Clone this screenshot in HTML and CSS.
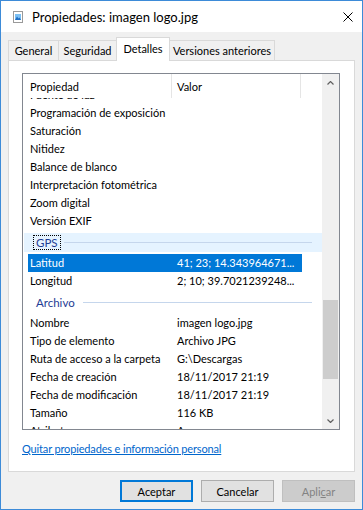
FILE: index.html
```html
<!DOCTYPE html>
<html lang="es">
<head>
<meta charset="utf-8">
<link rel="stylesheet" href="styles.css">
</head>
<body>
<div class="window">
  <div class="titlebar">
    <svg class="ticon" width="10" height="12" viewBox="0 0 10 12">
      <rect x="0.5" y="0.5" width="9" height="11" fill="#fff" stroke="#9a9a9a"/>
      <rect x="2" y="3" width="6" height="6" fill="#7cc0f4"/>
      <path d="M2 9 L4 5.5 L5.5 7.5 L6.5 6.5 L8 9 Z" fill="#1f6fc5"/>
    </svg>
    <span class="title">Propiedades: imagen logo.jpg</span>
    <svg class="close" width="10" height="10" viewBox="0 0 10 10">
      <path d="M0.5 0.5 L9.5 9.5 M9.5 0.5 L0.5 9.5" stroke="#000" stroke-width="1"/>
    </svg>
  </div>
  <div class="client">
    <div class="tabs">
      <div class="tab t-general">General</div>
      <div class="tab t-seg">Seguridad</div>
      <div class="tab t-det active">Detalles</div>
      <div class="tab t-ver">Versiones anteriores</div>
    </div>
    <div class="panel">
      <div class="listview">
        <div class="lv-main">
          <div class="lv-header">
            <div class="hcol h1">Propiedad</div>
            <div class="hcol h2">Valor</div>
            <div class="hcol h3"></div>
          </div>
          <div class="lv-body">
            <div class="lv-inner">
              <div class="row"><span class="k">Fuente de luz</span><span class="v"></span></div>
              <div class="row"><span class="k">Programación de exposición</span><span class="v"></span></div>
              <div class="row"><span class="k">Saturación</span><span class="v"></span></div>
              <div class="row"><span class="k">Nitidez</span><span class="v"></span></div>
              <div class="row"><span class="k">Balance de blanco</span><span class="v"></span></div>
              <div class="row"><span class="k">Interpretación fotométrica</span><span class="v"></span></div>
              <div class="row"><span class="k">Zoom digital</span><span class="v"></span></div>
              <div class="row"><span class="k">Versión EXIF</span><span class="v"></span></div>
              <div class="group hot"><div class="gbar"><span class="glabel focus">GPS</span><span class="gline"></span></div></div>
              <div class="row sel"><span class="k">Latitud</span><span class="v">41; 23; 14.343964671...</span></div>
              <div class="row"><span class="k">Longitud</span><span class="v">2; 10; 39.7021239248...</span></div>
              <div class="group g2"><div class="gbar"><span class="glabel">Archivo</span><span class="gline"></span></div></div>
              <div class="row"><span class="k">Nombre</span><span class="v">imagen logo.jpg</span></div>
              <div class="row"><span class="k">Tipo de elemento</span><span class="v">Archivo JPG</span></div>
              <div class="row"><span class="k">Ruta de acceso a la carpeta</span><span class="v">G:\Descargas</span></div>
              <div class="row"><span class="k">Fecha de creación</span><span class="v">18/11/2017 21:19</span></div>
              <div class="row"><span class="k">Fecha de modificación</span><span class="v">18/11/2017 21:19</span></div>
              <div class="row"><span class="k">Tamaño</span><span class="v">116 KB</span></div>
              <div class="row"><span class="k">Atributos</span><span class="v">A</span></div>
            </div>
          </div>
        </div>
        <div class="scrollbar">
          <div class="sarrow">
            <svg width="7" height="4" viewBox="0 0 7 4"><path d="M0.5 3.5 L3.5 0.5 L6.5 3.5" fill="none" stroke="#606060" stroke-width="1.2"/></svg>
          </div>
          <div class="track"><div class="thumb"></div></div>
          <div class="sarrow">
            <svg width="7" height="4" viewBox="0 0 7 4"><path d="M0.5 0.5 L3.5 3.5 L6.5 0.5" fill="none" stroke="#606060" stroke-width="1.2"/></svg>
          </div>
        </div>
      </div>
      <a class="link" href="#">Quitar propiedades e información personal</a>
    </div>
    <div class="buttons">
      <button class="btn default">Aceptar</button>
      <button class="btn">Cancelar</button>
      <button class="btn disabled">Apli<u>c</u>ar</button>
    </div>
  </div>
</div>
</body>
</html>
```

FILE: styles.css
```css
* { box-sizing: border-box; }
html, body { margin: 0; padding: 0; }
body {
  width: 363px;
  height: 510px;
  overflow: hidden;
  font-family: Lato, "Liberation Sans", Arial, sans-serif;
  font-size: 11px;
  color: #000;
  background: #f0f0f0;
}
.window {
  width: 363px;
  height: 510px;
  border: 1px solid #3d8bd8;
  background: #f0f0f0;
  display: flex;
  flex-direction: column;
}
.titlebar {
  height: 31px;
  background: #fff;
  display: flex;
  align-items: center;
  padding-left: 12px;
  flex: none;
}
.ticon { flex: none; }
.title {
  margin-left: 9px;
  font-size: 13px;
  flex: 1;
  white-space: nowrap;
}
.close { margin-right: 9px; flex: none; }
.client {
  flex: 1;
  display: flex;
  flex-direction: column;
}
.tabs {
  height: 28px;
  padding-top: 6px;
  padding-left: 7px;
  display: flex;
  align-items: flex-end;
}
.tab {
  height: 20px;
  border: 1px solid #d9d9d9;
  border-bottom: none;
  border-right: none;
  background: #f0f0f0;
  display: flex;
  align-items: center;
  justify-content: center;
  white-space: nowrap;
  line-height: 1;
}
.t-general { width: 50px; }
.t-seg { width: 58px; }
.t-det { width: 54px; }
.t-ver { width: 105px; border-right: 1px solid #d9d9d9; }
.tab.active {
  height: 24px;
  background: #fff;
  border-right: 1px solid #d9d9d9;
  margin-bottom: -1px;
  position: relative;
  z-index: 1;
  padding-bottom: 2px;
}
.tab.active + .tab { border-left: none; }
.panel {
  height: 412px;
  margin: 0 7px;
  border: 1px solid #d9d9d9;
  background: #fff;
  padding: 12px 0 0 13px;
  display: flex;
  flex-direction: column;
}
.listview {
  width: 318px;
  height: 357px;
  border: 1px solid #828790;
  display: flex;
  flex: none;
}
.lv-main {
  width: 299px;
  display: flex;
  flex-direction: column;
}
.lv-header {
  height: 24px;
  display: flex;
  flex: none;
}
.hcol {
  height: 24px;
  display: flex;
  align-items: center;
  border-right: 1px solid #e5e5e5;
}
.h1 { width: 149px; padding-left: 7px; }
.h2 { width: 129px; padding-left: 5px; }
.h3 { width: 21px; border-right: none; }
.lv-body {
  flex: 1;
  overflow: hidden;
}
.lv-inner { margin-top: -12px; }
.row {
  height: 18px;
  margin-left: 5px;
  width: 274px;
  display: flex;
  align-items: center;
  padding-bottom: 2px;
  white-space: nowrap;
}
.row .k { width: 149px; padding-left: 2px; flex: none; }
.row .v { flex: 1; }
.row.sel { background: #0078d7; color: #fff; }
.group {
  height: 24px;
  padding: 3px 0 2px 1px;
}
.gbar {
  height: 19px;
  display: flex;
  align-items: center;
  padding-left: 9px;
}
.group.hot .gbar { background: #e5f3ff; }
.glabel {
  color: #1e3c94;
  font-size: 11.5px;
  padding: 0 2px;
  border: 1px dotted transparent;
  height: 15px;
  line-height: 13px;
}
.glabel.focus { border-color: #000; }
.gline {
  flex: 1;
  height: 1px;
  background: #c5d6ec;
  margin-left: 3px;
  margin-right: 10px;
}
.g2 .gline { margin-left: 5px; }
.scrollbar {
  width: 17px;
  background: #f0f0f0;
  display: flex;
  flex-direction: column;
}
.sarrow {
  height: 17px;
  display: flex;
  align-items: center;
  justify-content: center;
  flex: none;
}
.track {
  flex: 1;
  padding-top: 209px;
}
.thumb {
  height: 79px;
  margin: 0 1px;
  background: #cdcdcd;
}
.link {
  margin-top: 11px;
  color: #0066cc;
  text-decoration: underline;
  line-height: 15px;
  letter-spacing: -0.15px;
  align-self: flex-start;
}
.buttons {
  display: flex;
  justify-content: flex-end;
  gap: 8px;
  padding: 8px 7px 0 0;
}
.btn {
  width: 73px;
  height: 22px;
  font-family: Lato, "Liberation Sans", Arial, sans-serif;
  font-size: 11px;
  color: #000;
  background: #e1e1e1;
  border: 1px solid #adadad;
  padding: 0;
  margin: 0;
}
.btn.default { border: 2px solid #0078d7; }
.btn.disabled { background: #cccccc; border-color: #bfbfbf; color: #838383; }
```
